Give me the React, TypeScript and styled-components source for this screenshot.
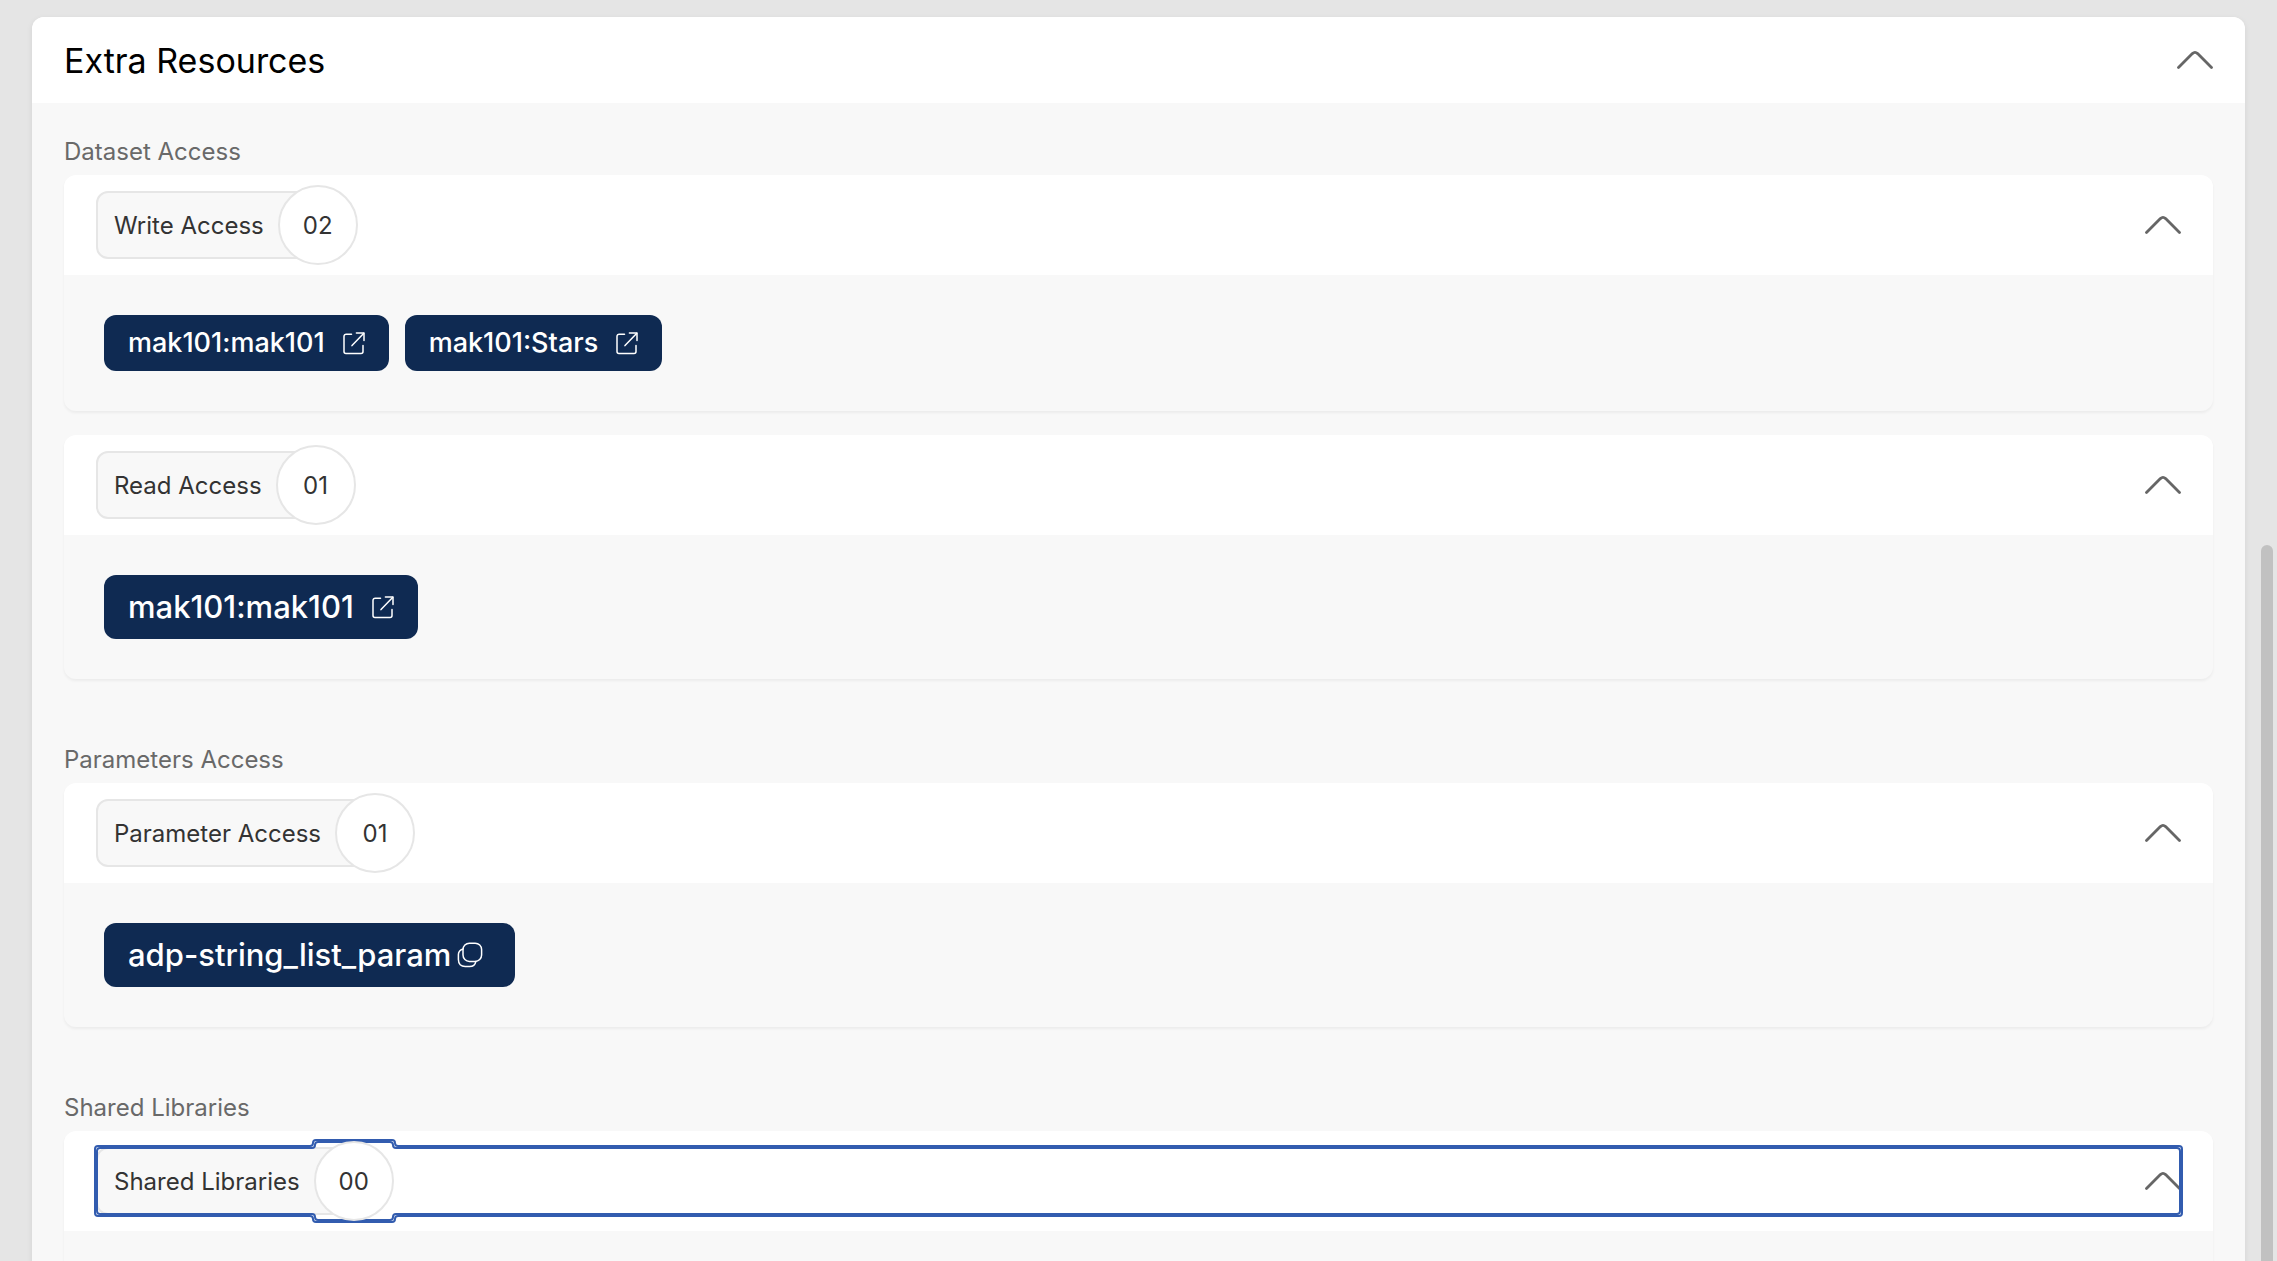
import React, { useState } from "react";
import styled, { createGlobalStyle, css } from "styled-components";

const GlobalStyle = createGlobalStyle`
  *, *::before, *::after { box-sizing: border-box; }
  body {
    margin: 0;
    background: #e5e5e5;
    font-family: Inter, "Liberation Sans", sans-serif;
    color: #333333;
  }
  button { font: inherit; color: inherit; }
`;

const Page = styled.main`
  height: 100vh;
  overflow: hidden;
  padding: 17px 32px 0;
`;

const ScrollThumb = styled.div`
  position: fixed;
  top: 545px;
  right: 4px;
  bottom: -12px;
  width: 12px;
  border-radius: 6px;
  background: #c1c1c1;
`;

const Panel = styled.section`
  border-radius: 12px;
  background: #f8f8f8;
  box-shadow: 0 2px 6px rgba(0, 0, 0, 0.08);
  padding-bottom: 64px;
`;

const PanelHeader = styled.button`
  display: flex;
  align-items: center;
  justify-content: space-between;
  width: 100%;
  height: 86px;
  padding: 0 32px;
  border: 0;
  border-radius: 12px 12px 0 0;
  background: #ffffff;
  cursor: pointer;
`;

const PanelTitle = styled.span`
  padding-top: 2px;
  font-size: 34px;
  line-height: 44px;
  color: #000000;
`;

const PanelBody = styled.div`
  display: flex;
  flex-direction: column;
  gap: 64px;
  padding: 32px 32px 0;
`;

const Group = styled.div`
  display: flex;
  flex-direction: column;
`;

const GroupLabel = styled.h3`
  margin: 0 0 6px;
  font-size: 24px;
  line-height: 34px;
  font-weight: 400;
  color: #696969;
`;

const CardStack = styled.div`
  display: flex;
  flex-direction: column;
  gap: 24px;
`;

const Card = styled.div`
  border-radius: 12px;
  background: #f8f8f8;
  box-shadow: 0 2px 3px rgba(0, 0, 0, 0.05);
`;

const CardHeader = styled.div`
  padding: 16px 32px;
  border-radius: 12px 12px 0 0;
  background: #ffffff;
`;

const focusRing = (offset: number) => css`
  outline: auto 4px #325caf;
  outline-offset: ${offset}px;
`;

const CardToggle = styled.button<{ $focused?: boolean }>`
  display: block;
  width: 100%;
  height: 68px;
  padding: 0;
  border: 0;
  background: transparent;
  cursor: pointer;
  outline: none;
  ${(p) => p.$focused && focusRing(1)}
`;

const ToggleContent = styled.span<{ $focused?: boolean }>`
  display: flex;
  align-items: center;
  justify-content: space-between;
  height: 100%;
  ${(p) => p.$focused && focusRing(-1)}
`;

const Badge = styled.span`
  display: flex;
  align-items: center;
`;

const BadgeName = styled.span`
  display: flex;
  align-items: center;
  height: 68px;
  padding: 2px 52px 0 16px;
  border: 2px solid #e6e6e6;
  border-radius: 12px;
  background: #f8f8f8;
  font-size: 24px;
  line-height: 32px;
`;

const BadgeCount = styled.span`
  position: relative;
  display: flex;
  align-items: center;
  justify-content: center;
  width: 80px;
  height: 80px;
  margin: -6px 0 -6px -40px;
  padding-top: 2px;
  border: 2px solid #e6e6e6;
  border-radius: 50%;
  background: #ffffff;
  font-size: 24px;
  line-height: 32px;
`;

const CardBody = styled.div`
  display: flex;
  flex-wrap: wrap;
  gap: 16px;
  padding: 40px;
`;

const chip = css<{ $large?: boolean }>`
  display: inline-flex;
  align-items: center;
  height: ${(p) => (p.$large ? 64 : 56)}px;
  border: 0;
  border-radius: 12px;
  background: #0f2a52;
  color: #ffffff;
  font-size: ${(p) => (p.$large ? 31 : 27)}px;
  line-height: 40px;
  font-weight: 500;
  text-decoration: none;
  cursor: pointer;
`;

const LinkChip = styled.a<{ $large?: boolean }>`
  ${chip}
  gap: 16px;
  padding: 0 24px;
`;

const CopyChip = styled.button<{ $large?: boolean }>`
  && {
    ${chip}
    gap: 6px;
    padding: 0 32px 0 24px;
  }
`;

const Chevron = styled.svg<{ $open: boolean }>`
  flex: none;
  width: 36px;
  height: 20px;
  transform: ${(p) => (p.$open ? "none" : "rotate(180deg)")};
`;

const ChevronIcon = ({ open }: { open: boolean }) => (
  <Chevron $open={open} viewBox="0 0 36 20" fill="none" aria-hidden="true">
    <path
      d="M1.5 17.6 L15.4 3.6 Q18 1.2 20.6 3.6 L34.5 17.6"
      stroke="#666666"
      strokeWidth="2.8"
      strokeLinecap="round"
      strokeLinejoin="round"
    />
  </Chevron>
);

const ExternalIcon = () => (
  <svg width="24" height="24" viewBox="0 0 24 24" fill="none" stroke="#ffffff" strokeWidth="1.5" strokeLinecap="round" strokeLinejoin="round" aria-hidden="true">
    <path d="M10.5 3.2H5.2A2.2 2.2 0 0 0 3 5.4V20.4A2 2 0 0 0 5 22.4H20A2 2 0 0 0 22 20.4V14.5" />
    <path d="M15.4 2H23V9.4" />
    <path d="M22.6 2.4L11 14.6" />
  </svg>
);

const CopyIcon = () => (
  <svg width="26" height="26" viewBox="0 0 26 26" fill="none" stroke="#ffffff" strokeWidth="1.5" strokeLinecap="round" strokeLinejoin="round" aria-hidden="true">
    <rect x="6" y="1.2" width="18.6" height="18.2" rx="6.4" />
    <path d="M6 7C2.8 8 1.4 9.8 1.4 12.6V17.6C1.4 21.8 4 24.6 8.2 24.6H12.6C16 24.6 18.2 22.8 18.8 19.6" />
  </svg>
);

type Item = { label: string; kind: "link" | "copy"; large?: boolean };

const ItemChip = ({ item }: { item: Item }) =>
  item.kind === "link" ? (
    <LinkChip href="#" $large={item.large}>
      {item.label}
      <ExternalIcon />
    </LinkChip>
  ) : (
    <CopyChip type="button" $large={item.large}>
      {item.label}
      <CopyIcon />
    </CopyChip>
  );

const AccessCard = ({ name, items, focused }: { name: string; items: Item[]; focused?: boolean }) => {
  const [open, setOpen] = useState(true);
  return (
    <Card>
      <CardHeader>
        <CardToggle type="button" $focused={focused} aria-expanded={open} onClick={() => setOpen(!open)}>
          <ToggleContent $focused={focused}>
            <Badge>
              <BadgeName>{name}</BadgeName>
              <BadgeCount>{String(items.length).padStart(2, "0")}</BadgeCount>
            </Badge>
            <ChevronIcon open={open} />
          </ToggleContent>
        </CardToggle>
      </CardHeader>
      {open && (
        <CardBody>
          {items.map((item) => (
            <ItemChip key={item.label} item={item} />
          ))}
        </CardBody>
      )}
    </Card>
  );
};

type GroupData = { label: string; cards: { name: string; items: Item[]; focused?: boolean }[] };

const groups: GroupData[] = [
  {
    label: "Dataset Access",
    cards: [
      {
        name: "Write Access",
        items: [
          { label: "mak101:mak101", kind: "link" },
          { label: "mak101:Stars", kind: "link" },
        ],
      },
      { name: "Read Access", items: [{ label: "mak101:mak101", kind: "link", large: true }] },
    ],
  },
  {
    label: "Parameters Access",
    cards: [{ name: "Parameter Access", items: [{ label: "adp-string_list_param", kind: "copy", large: true }] }],
  },
  {
    label: "Shared Libraries",
    cards: [{ name: "Shared Libraries", items: [], focused: true }],
  },
];

export default function App() {
  const [open, setOpen] = useState(true);
  return (
    <>
      <GlobalStyle />
      <Page>
        <Panel>
          <PanelHeader type="button" aria-expanded={open} onClick={() => setOpen(!open)}>
            <PanelTitle>Extra Resources</PanelTitle>
            <ChevronIcon open={open} />
          </PanelHeader>
          {open && (
            <PanelBody>
              {groups.map((group) => (
                <Group key={group.label}>
                  <GroupLabel>{group.label}</GroupLabel>
                  <CardStack>
                    {group.cards.map((card) => (
                      <AccessCard key={card.name} {...card} />
                    ))}
                  </CardStack>
                </Group>
              ))}
            </PanelBody>
          )}
        </Panel>
      </Page>
      <ScrollThumb />
    </>
  );
}
